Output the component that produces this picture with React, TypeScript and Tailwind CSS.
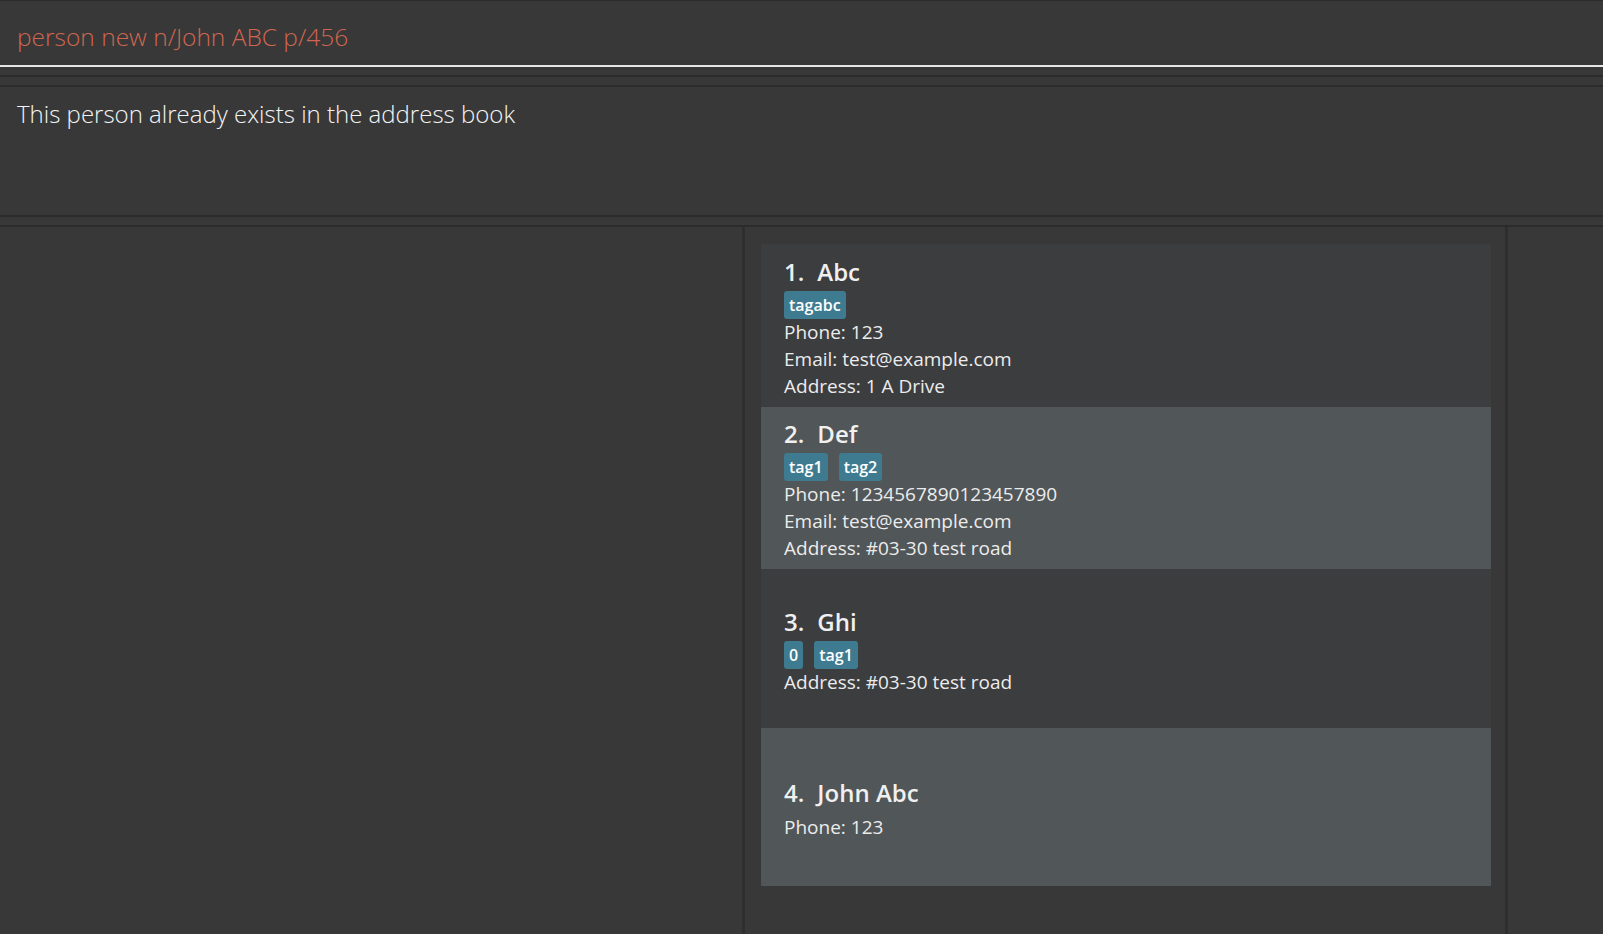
import React from 'react';

interface Person {
  name: string;
  tags: string[];
  phone?: string;
  email?: string;
  address?: string;
  height: string;
  odd: boolean;
}

const people: Person[] = [
  { name: 'Abc', tags: ['tagabc'], phone: '123', email: 'test@example.com', address: '1 A Drive', height: 'h-[163px]', odd: false },
  { name: 'Def', tags: ['tag1', 'tag2'], phone: '1234567890123457890', email: 'test@example.com', address: '#03-30 test road', height: 'h-[162px]', odd: true },
  { name: 'Ghi', tags: ['0', 'tag1'], address: '#03-30 test road', height: 'h-[159px]', odd: false },
  { name: 'John Abc', tags: [], phone: '123', height: 'h-[158px]', odd: true },
];

function PersonCard({ person, index }: { person: Person; index: number }) {
  return (
    <div
      className={`${person.height} flex flex-col justify-center pl-[23px] pt-[4px] ${person.odd ? 'bg-[#515658]' : 'bg-[#3c3d3f]'}`}
    >
      {/* name row */}
      <div className="flex items-center h-[32px] text-[24px] font-semibold text-[#f0f0f0]">
        <span className="mr-[13px]">{index + 1}.</span>
        <span>{person.name}</span>
      </div>
      {person.tags.length > 0 ? (
        <div className="flex gap-[11px] mt-[3px]">
          {person.tags.map((t) => (
            <span
              key={t}
              className="h-[28px] px-[5px] flex items-center rounded-[3px] bg-[#3e7b91] text-[16px] font-semibold text-white"
            >
              {t}
            </span>
          ))}
        </div>
      ) : (
        <div className="h-[5px]" />
      )}
      {person.phone && <div className="h-[27px] leading-[27px] text-[19px] text-[#ececec]">Phone: {person.phone}</div>}
      {person.email && <div className="h-[27px] leading-[27px] text-[19px] text-[#ececec]">Email: {person.email}</div>}
      {person.address && <div className="h-[27px] leading-[27px] text-[19px] text-[#ececec]">Address: {person.address}</div>}
    </div>
  );
}

export default function App() {
  return (
    <div
      className="w-[1603px] h-[934px] overflow-hidden bg-[#383838] flex flex-col"
      style={{ fontFamily: '"Open Sans", "Noto Sans", sans-serif' }}
    >
      {/* Command box */}
      <div className="h-[67px] shrink-0 border-t border-[#2b2b2b] border-b-2 border-b-[#e6e6e6] flex items-center pl-[17px] pt-[8px]">
        <span className="text-[24.5px] font-light text-[#d06651]">person new n/John ABC p/456</span>
      </div>
      <div className="h-[8px] shrink-0" />
      <div className="h-[2px] shrink-0 bg-[#2b2b2b]" />
      <div className="h-[8px] shrink-0" />

      {/* Result display */}
      <div className="h-[132px] shrink-0 border-t-2 border-b-2 border-[#2b2b2b] pl-[17px] pt-[9px]">
        <span className="text-[24px] font-light text-[#f4f4f4]">This person already exists in the address book</span>
      </div>
      <div className="h-[8px] shrink-0" />
      <div className="h-[2px] shrink-0 bg-[#2b2b2b]" />

      {/* Main panes */}
      <div className="flex-1 flex">
        <div className="w-[742px] shrink-0" />
        <div className="w-[3px] shrink-0 bg-[#2e2e2e]" />
        <div className="w-[760px] shrink-0 pl-[16px] pr-[14px] pt-[17px]">
          {people.map((p, i) => (
            <PersonCard key={p.name} person={p} index={i} />
          ))}
        </div>
        <div className="w-[3px] shrink-0 bg-[#2e2e2e]" />
        <div className="flex-1" />
      </div>
    </div>
  );
}
